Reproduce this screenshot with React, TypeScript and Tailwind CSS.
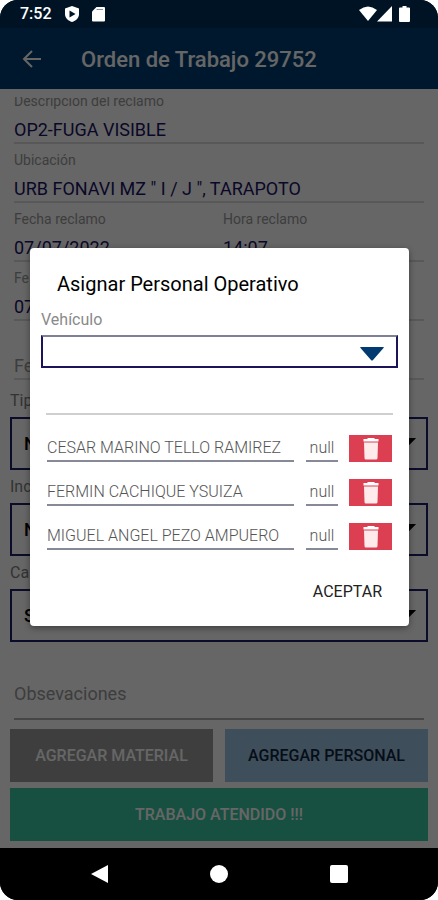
import type { ReactNode } from "react";

const crew = [
  "CESAR MARINO TELLO RAMIREZ",
  "FERMIN CACHIQUE YSUIZA",
  "MIGUEL ANGEL PEZO AMPUERO",
];

function StatusBar() {
  return (
    <div className="flex h-7 items-center justify-between bg-[#001325] pr-7 pl-5 text-white">
      <div className="flex items-center gap-3">
        <span className="text-base font-medium">7:52</span>
        <svg className="h-4 w-4" viewBox="0 0 16 16" aria-hidden="true">
          <path d="M8 0 15 2.500V8c0 4-3 6.800-7 8C4 14.800 1 12 1 8V2.500Z" fill="white" />
          <path d="M5.500 4.500 11.500 8l-6 3.500Z" fill="#001325" />
        </svg>
        <svg className="h-4 w-[13px]" viewBox="0 0 13 16" aria-hidden="true">
          <path d="M4.500 1H12q1 0 1 1v12.500q0 1-1 1H1q-1 0-1-1V5.500Z" fill="white" />
          <path d="M4.500 3.500H11" stroke="#8a949e" strokeWidth="1" />
        </svg>
      </div>
      <div className="flex items-center">
        <svg className="h-4 w-[18px]" viewBox="0 0 18 16" aria-hidden="true">
          <path d="M0 4Q9-3 18 4L9 15Z" fill="white" />
        </svg>
        <svg className="mr-[7px] h-4 w-[15px]" viewBox="0 0 15 16" aria-hidden="true">
          <path d="M15 0V15.500H0Z" fill="white" />
        </svg>
        <svg className="h-4 w-[11px]" viewBox="0 0 11 16" aria-hidden="true">
          <path d="M3.500 0h4v1.500H10q1 0 1 1V15q0 1-1 1H1q-1 0-1-1V2.500q0-1 1-1h2.500Z" fill="white" />
        </svg>
      </div>
    </div>
  );
}

function Field({ id, label, value }: { id: string; label: string; value: string }) {
  return (
    <div className="flex flex-col">
      <label htmlFor={id} className="h-[18px] text-sm leading-[18px] text-[#9a9a9a]">
        {label}
      </label>
      <input
        id={id}
        readOnly
        defaultValue={value}
        className="h-[34px] w-full border-b-2 border-[#dcdcdc] bg-transparent pt-[6px] text-lg text-[#1b1464] outline-none"
      />
    </div>
  );
}

function Picker({ id, label, value }: { id: string; label: string; value: string }) {
  return (
    <div className="flex flex-col gap-[7px] pt-2">
      <label htmlFor={id} className="h-[18px] text-base leading-[18px] text-[#808080]">
        {label}
      </label>
      <div className="grid items-center">
        <select
          id={id}
          className="col-start-1 row-start-1 h-[53px] w-full appearance-none border-2 border-[#1b1f68] bg-transparent px-3 text-lg font-medium text-black outline-none"
        >
          <option>{value}</option>
        </select>
        <Triangle className="pointer-events-none col-start-1 row-start-1 mr-3 mb-1 h-2 w-4 justify-self-end text-black" />
      </div>
    </div>
  );
}

function Triangle({ className }: { className: string }) {
  return (
    <svg className={className} viewBox="0 0 24 14" preserveAspectRatio="none" aria-hidden="true">
      <path d="M1 0H23q1.500 0 .500 1L13 13q-1 1-2 0L.500 1Q-.500 0 1 0Z" fill="currentColor" />
    </svg>
  );
}

function TrashIcon() {
  return (
    <svg className="h-[22px] w-4" viewBox="0 0 16 22" aria-hidden="true">
      <path d="M5 0h6l1 1h3.500v2.500H.500V1H4Z" fill="white" />
      <path d="M1 4.500h14l-.500 15.500q0 1.500-1.500 1.500H3q-1.500 0-1.500-1.500Z" fill="#ffeaec" />
    </svg>
  );
}

function ActionButton({ className, children }: { className: string; children: ReactNode }) {
  return (
    <button type="button" className={`h-[53px] w-full text-base font-medium ${className}`}>
      {children}
    </button>
  );
}

function AssignDialog() {
  return (
    <section
      role="dialog"
      aria-modal="true"
      aria-labelledby="dialog-title"
      className="w-full rounded-sm bg-white px-[11px] pt-6 pb-[17px] shadow-[0_2px_6px_rgba(0,0,0,0.4)]"
    >
      <h2 id="dialog-title" className="pl-4 text-xl leading-6 text-black">
        Asignar Personal Operativo
      </h2>
      <label htmlFor="vehiculo" className="mt-3.5 block text-base leading-5 text-[#8a8a8a]">
        Vehículo
      </label>
      <div className="mt-[5px] grid items-center">
        <select
          id="vehiculo"
          className="col-start-1 row-start-1 h-[33px] w-full appearance-none border-2 border-[#1c1458] border-t-[#7d8096] bg-white px-2 text-base outline-none"
        >
          <option></option>
        </select>
        <Triangle className="pointer-events-none col-start-1 row-start-1 mt-1 mr-3.5 h-3.5 w-6 justify-self-end text-[#003a70]" />
      </div>
      <hr className="mx-[5px] mt-[45px] border-t-2 border-[#cfcfcf]" />
      <ul className="mx-[6px] mt-5 flex flex-col gap-[17px]">
        {crew.map((name) => (
          <li key={name} className="flex h-[27px]">
            <input
              aria-label="Operario"
              readOnly
              defaultValue={name}
              className="mr-3 w-0 min-w-0 flex-1 border-b-2 border-[#868996] text-base font-light text-[#555] outline-none"
            />
            <input
              aria-label="Cargo"
              readOnly
              defaultValue="null"
              className="mr-[11px] w-8 border-b-2 border-[#868996] text-center text-base font-light text-[#555] outline-none"
            />
            <button
              type="button"
              aria-label={`Quitar a ${name}`}
              className="flex w-[43px] items-center justify-center bg-[#dc3f52]"
            >
              <TrashIcon />
            </button>
          </li>
        ))}
      </ul>
      <div className="mt-6 -mb-px flex justify-end pr-2">
        <button type="button" className="h-9 px-2 text-base text-[#222]">
          ACEPTAR
        </button>
      </div>
    </section>
  );
}

export default function App() {
  return (
    <div className="min-h-screen bg-white font-['Roboto',sans-serif]">
      <div className="flex min-h-screen flex-col overflow-hidden rounded-[18px] bg-black">
        <StatusBar />
        <div className="relative flex flex-1 flex-col bg-white">
          <header className="flex h-[61px] items-center bg-[#003c70] pl-[22px] text-white">
            <button type="button" aria-label="Volver" className="flex">
              <svg className="h-5 w-5" viewBox="0 0 20 20" fill="none" stroke="currentColor" strokeWidth="2" aria-hidden="true">
                <path d="M10 2 2 10l8 8M2 10h17" />
              </svg>
            </button>
            <h1 className="pt-[2px] pl-[39px] text-[22px] font-medium">Orden de Trabajo 29752</h1>
          </header>
          <main className="flex flex-1 flex-col px-[10px] pt-2 pb-[7px]">
            <div className="flex-1 overflow-hidden">
              <div className="-mt-[5px] mr-1 ml-1 flex flex-col gap-[7px]">
                <Field id="descripcion" label="Descripción del reclamo" value="OP2-FUGA VISIBLE" />
                <Field id="ubicacion" label="Ubicación" value={'URB FONAVI MZ " I / J ", TARAPOTO'} />
                <div className="grid grid-cols-2 gap-2">
                  <Field id="fecha" label="Fecha reclamo" value="07/07/2022" />
                  <Field id="hora" label="Hora reclamo" value="14:07" />
                </div>
                <Field id="fecha-inicio" label="Fe" value="07" />
              </div>
              <div className="mx-1 mt-[25px] pb-1">
                <input
                  aria-label="Fecha"
                  placeholder="Fe"
                  className="block h-[34px] w-full border-b-2 border-[#dcdcdc] bg-transparent pt-[6px] text-lg outline-none placeholder:text-[#9a9a9a]"
                />
              </div>
              <Picker id="tipo" label="Tip" value="N" />
              <Picker id="incidencia" label="Inc" value="N" />
              <Picker id="causa" label="Ca" value="S" />
              <div className="mx-1 pt-[34px]">
                <input
                  aria-label="Obsevaciones"
                  placeholder="Obsevaciones"
                  className="block h-11 w-full border-b-2 border-[#b0b0b0] bg-transparent pb-2 text-lg outline-none placeholder:text-[#9a9a9a]"
                />
              </div>
            </div>
            <div className="mt-[9px] grid grid-cols-2 gap-x-3 gap-y-[6px]">
              <ActionButton className="bg-[#9b9b9b] text-white">AGREGAR MATERIAL</ActionButton>
              <ActionButton className="bg-[#9dc3e3] text-[#10243c]">AGREGAR PERSONAL</ActionButton>
              <div className="col-span-2">
                <ActionButton className="bg-[#3ac6a0] text-white">TRABAJO ATENDIDO !!!</ActionButton>
              </div>
            </div>
          </main>
          <div className="absolute inset-0 flex items-center justify-center bg-black/60 pr-[29px] pb-[2px] pl-[30px]">
            <AssignDialog />
          </div>
        </div>
        <nav className="grid h-[52px] grid-cols-[1fr_auto_1fr] items-center gap-[102px] bg-black text-white">
          <button type="button" aria-label="Atrás" className="justify-self-end">
            <svg className="h-[18px] w-[17px]" viewBox="0 0 17 18" aria-hidden="true">
              <path d="M17 0v18L0 9Z" fill="currentColor" />
            </svg>
          </button>
          <button type="button" aria-label="Inicio" className="h-[18px] w-[18px] rounded-full bg-white" />
          <button type="button" aria-label="Recientes" className="h-[18px] w-[18px] rounded-[2px] bg-white" />
        </nav>
      </div>
    </div>
  );
}
